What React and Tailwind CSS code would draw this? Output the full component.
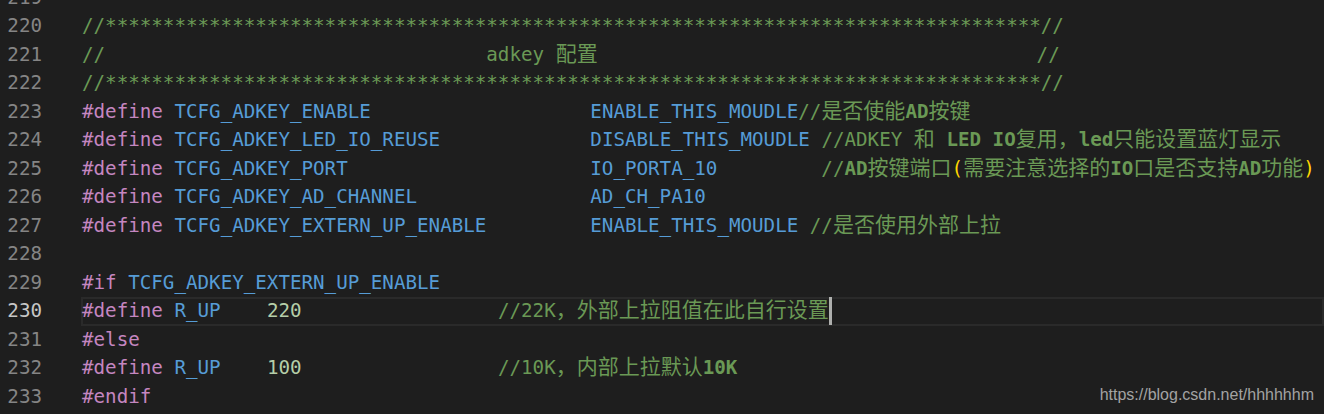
import React from "react";

const MONO = { fontFamily: '"DejaVu Sans Mono", "Liberation Mono", monospace' };

const sp = (n) => " ".repeat(n);
const stars = "*".repeat(81);

const K = (t) => ["kw", t];
const I = (t) => ["id", t];
const N = (t) => ["num", t];
const C = (t) => ["cm", t];
const B = (t) => ["cmb", t];
const J = (t) => ["cjk", t];
const R = (t) => ["br", t];
const P = (t) => ["pl", t];

const lines = [
  { n: 219, t: [] },
  { n: 220, t: [C("//" + stars + "//")] },
  { n: 221, t: [C("//" + sp(33) + "adkey "), J("配置"), C(sp(38) + "//")] },
  { n: 222, t: [C("//" + stars + "//")] },
  {
    n: 223,
    t: [K("#define"), P(" "), I("TCFG_ADKEY_ENABLE"), P(sp(19)), I("ENABLE_THIS_MOUDLE"), C("//"), J("是否使能"), B("AD"), J("按键")],
  },
  {
    n: 224,
    t: [
      K("#define"), P(" "), I("TCFG_ADKEY_LED_IO_REUSE"), P(sp(13)), I("DISABLE_THIS_MOUDLE"), P(" "),
      C("//ADKEY "), J("和"), C(" "), B("LED"), C(" "), B("IO"), J("复用，"), B("led"), J("只能设置蓝灯显示"),
    ],
  },
  {
    n: 225,
    t: [
      K("#define"), P(" "), I("TCFG_ADKEY_PORT"), P(sp(21)), I("IO_PORTA_10"), P(sp(9)),
      C("//"), B("AD"), J("按键端口"), R("("), J("需要注意选择的"), B("IO"), J("口是否支持"), B("AD"), J("功能"), R(")"),
    ],
  },
  { n: 226, t: [K("#define"), P(" "), I("TCFG_ADKEY_AD_CHANNEL"), P(sp(15)), I("AD_CH_PA10")] },
  {
    n: 227,
    t: [K("#define"), P(" "), I("TCFG_ADKEY_EXTERN_UP_ENABLE"), P(sp(9)), I("ENABLE_THIS_MOUDLE"), P(" "), C("//"), J("是否使用外部上拉")],
  },
  { n: 228, t: [] },
  { n: 229, t: [K("#if"), P(" "), I("TCFG_ADKEY_EXTERN_UP_ENABLE")] },
  {
    n: 230,
    active: true,
    t: [K("#define"), P(" "), I("R_UP"), P(sp(4)), N("220"), P(sp(17)), C("//22K"), J("，外部上拉阻值在此自行设置")],
  },
  { n: 231, t: [K("#else")] },
  {
    n: 232,
    t: [K("#define"), P(" "), I("R_UP"), P(sp(4)), N("100"), P(sp(17)), C("//10K"), J("，内部上拉默认"), B("10K")],
  },
  { n: 233, t: [K("#endif")] },
];

function Token({ type, text }) {
  switch (type) {
    case "kw":
      return <span className="text-[#c586c0]">{text}</span>;
    case "id":
      return <span className="text-[#569cd6]">{text}</span>;
    case "num":
      return <span className="text-[#b5cea8]">{text}</span>;
    case "cm":
      return <span className="text-[#6a9955]">{text}</span>;
    case "cmb":
      return <span className="text-[#6a9955] font-bold">{text}</span>;
    case "br":
      return <span className="text-[#ffd700]">{text}</span>;
    case "cjk":
      return (
        <span
          className="text-[#6a9955] text-[21px] leading-none"
          style={{ fontFamily: '"Noto Sans CJK SC", sans-serif' }}
        >
          {text}
        </span>
      );
    default:
      return <span>{text}</span>;
  }
}

export default function App() {
  return (
    <div className="relative w-[1324px] h-[414px] overflow-hidden bg-[#1e1e1e]">
      <div className="flex flex-col mt-[-16.5px] text-[19.19px]" style={MONO}>
        {lines.map((line) => (
          <div key={line.n} className="flex h-[28.5px] leading-[28.5px]">
            <div
              className={
                "w-[42px] shrink-0 text-right " +
                (line.active ? "text-[#c6c6c6]" : "text-[#858585]")
              }
            >
              {line.n}
            </div>
            <div
              className={
                "ml-[39px] flex-1 whitespace-pre pl-px " +
                (line.active ? "ring-2 ring-inset ring-[#2a2a2a]" : "")
              }
            >
              {line.t.map(([type, text], i) => (
                <Token key={i} type={type} text={text} />
              ))}
              {line.active && (
                <span className="inline-block w-[3px] h-[28px] bg-[#aeafad] align-middle -mt-[2px]" />
              )}
            </div>
          </div>
        ))}
      </div>
      <div
        className="absolute right-[10px] bottom-[10px] text-[16px] leading-[18px] text-[#a3a3a3]"
        style={{ fontFamily: '"Liberation Sans", Arial, sans-serif' }}
      >
        https://blog.csdn.net/hhhhhhm
      </div>
    </div>
  );
}
